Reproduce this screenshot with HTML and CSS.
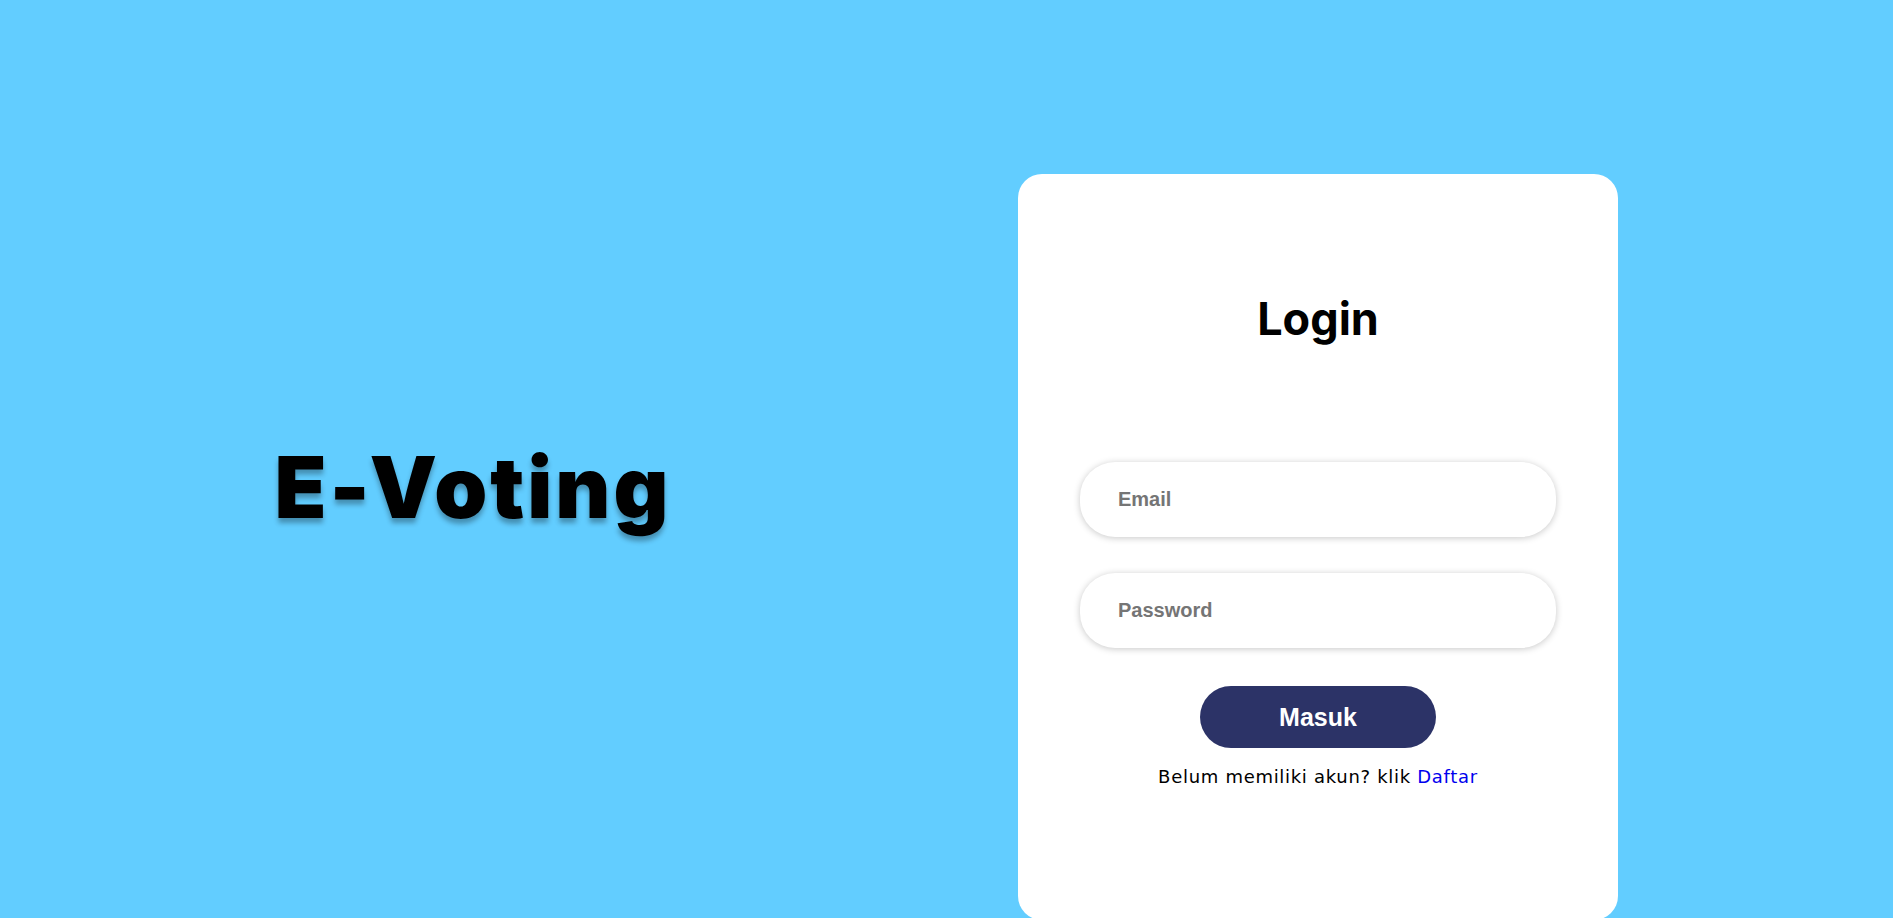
FILE: index.html
```html
<!DOCTYPE html>
<html lang="id">
<head>
<meta charset="utf-8">
<title>E-Voting - Login</title>
<link rel="stylesheet" href="styles.css">
</head>
<body>
<main class="page">
  <section class="brand">
    <h2 class="brand-title">E-Voting</h2>
  </section>
  <section class="auth">
    <div class="card">
      <h1 class="card-title">Login</h1>
      <form class="form">
        <input class="field" type="email" placeholder="Email" autofocus>
        <input class="field" type="password" placeholder="Password">
        <button class="btn" type="button">Masuk</button>
      </form>
      <p class="note">Belum memiliki akun? klik <a class="link" href="#">Daftar</a></p>
    </div>
  </section>
</main>
</body>
</html>
```
FILE: styles.css
```css
* { box-sizing: border-box; }
html, body { margin: 0; padding: 0; }
body {
  background: #62cdff;
  font-family: Inter, "Noto Sans", sans-serif;
  height: 918px;
  overflow: hidden;
}
.page {
  display: flex;
  height: 918px;
}
.brand {
  width: 946px;
  display: flex;
  align-items: center;
  justify-content: center;
  padding-top: 56px;
}
.brand-title {
  margin: 0;
  font-family: Inter, sans-serif;
  font-weight: 900;
  font-size: 85px;
  line-height: 1;
  letter-spacing: 3px;
  color: #000;
  text-shadow: 0 5px 5px rgba(0, 0, 0, 0.3);
}
.auth {
  flex: 1;
  padding-top: 174px;
  padding-left: 72px;
}
.card {
  width: 600px;
  height: 746px;
  background: #fff;
  border-radius: 24px;
  padding: 0 62px;
  display: flex;
  flex-direction: column;
  align-items: center;
}
.card-title {
  margin: 118px 0 0;
  font-size: 45px;
  line-height: 54px;
  font-weight: 700;
  color: #000;
}
.form {
  margin-top: 116px;
  width: 100%;
  display: flex;
  flex-direction: column;
  align-items: center;
}
.field {
  width: 100%;
  height: 75px;
  border: none;
  outline: none;
  border-radius: 35px;
  background: #fff;
  box-shadow: 0 1px 7px rgba(0, 0, 0, 0.22);
  padding: 0 38px;
  font-family: "Liberation Sans", Arial, sans-serif;
  font-size: 20px;
  font-weight: 700;
  color: #333;
  margin-bottom: 36px;
}
.field::placeholder { color: #757575; }
.field + .field { margin-bottom: 38px; }
.btn {
  width: 236px;
  height: 62px;
  border: none;
  border-radius: 31px;
  background: #2c3367;
  color: #fff;
  font-family: "Liberation Sans", Arial, sans-serif;
  font-size: 25px;
  font-weight: 700;
  cursor: pointer;
}
.note {
  margin: 16px 0 0;
  font-family: "DejaVu Sans", sans-serif;
  font-size: 18px;
  line-height: 25px;
  letter-spacing: 0.7px;
  color: #000;
}
.link {
  color: #0000ee;
  text-decoration: none;
}
```
